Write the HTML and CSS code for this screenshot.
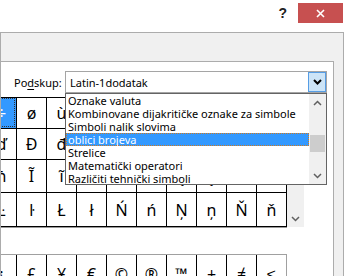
FILE: index.html
```html
<!DOCTYPE html>
<html lang="hr">
<head>
  <meta charset="UTF-8" />
  <meta name="viewport" content="width=device-width, initial-scale=1.0"/>
  <title>Simbol</title>
  <link rel="stylesheet" href="styles.css">
</head>
<body>
  <div class="titlebar">
    <span class="help">?</span>
    <div class="close">
      <svg width="9" height="9" viewBox="0 0 9 9"><path d="M1 1L8 8M8 1L1 8" stroke="#fff" stroke-width="1.6"/></svg>
    </div>
  </div>

  <div class="frame">
    <div class="tabs"></div>

    <div class="page">
      <div class="subset">
        <label class="subset-label">Po<u>d</u>skup:</label>
        <div class="combo">
          <span class="combo-value">Latin-1dodatak</span>
          <span class="combo-btn">
            <svg width="9" height="6" viewBox="0 0 9 6"><path d="M1 1L4.5 4.5L8 1" fill="none" stroke="#000" stroke-width="2"/></svg>
          </span>

          <!-- otvoreni popis podskupova -->
          <div class="dropdown">
            <ul class="options">
              <li>Oznake valuta</li>
              <li>Kombinovane dijakritičke oznake za simbole</li>
              <li>Simboli nalik slovima</li>
              <li class="selected">oblici brojeva</li>
              <li>Strelice</li>
              <li>Matematički operatori</li>
              <li>Različiti tehnički simboli</li>
            </ul>
            <div class="vscroll">
              <span class="arrow"><svg width="9" height="6" viewBox="0 0 9 6"><path d="M1 5L4.5 1.5L8 5" fill="none" stroke="#606060" stroke-width="1.5"/></svg></span>
              <span class="track"><span class="thumb"></span></span>
              <span class="arrow"><svg width="9" height="6" viewBox="0 0 9 6"><path d="M1 1L4.5 4.5L8 1" fill="none" stroke="#606060" stroke-width="1.5"/></svg></span>
            </div>
          </div>
        </div>
      </div>

      <div class="symbols">
        <div class="grid">
          <span class="cell active">÷</span><span class="cell">ø</span><span class="cell">ù</span><span class="cell">ú</span><span class="cell">û</span><span class="cell">ü</span><span class="cell">ý</span><span class="cell">þ</span><span class="cell">ÿ</span><span class="cell">Ā</span>
          <span class="cell">ď</span><span class="cell">Đ</span><span class="cell">đ</span><span class="cell">Ē</span><span class="cell">ē</span><span class="cell">Ĕ</span><span class="cell">ĕ</span><span class="cell">Ė</span><span class="cell">ė</span><span class="cell">Ę</span>
          <span class="cell">ħ</span><span class="cell">Ĩ</span><span class="cell">ĩ</span><span class="cell">Ī</span><span class="cell">ī</span><span class="cell">Ĭ</span><span class="cell">Į</span><span class="cell">į</span><span class="cell">İ</span><span class="cell">ı</span>
          <span class="cell">Ŀ</span><span class="cell">ŀ</span><span class="cell">Ł</span><span class="cell">ł</span><span class="cell">Ń</span><span class="cell">ń</span><span class="cell">Ņ</span><span class="cell">ņ</span><span class="cell">Ň</span><span class="cell">ň</span>
        </div>
        <div class="grid-scroll">
          <svg width="9" height="6" viewBox="0 0 9 6"><path d="M1 1L4.5 4.5L8 1" fill="none" stroke="#606060" stroke-width="1.5"/></svg>
        </div>
      </div>

      <div class="recent">
        <span class="cell">¡</span><span class="cell">£</span><span class="cell">¥</span><span class="cell">€</span><span class="cell">©</span><span class="cell">®</span><span class="cell">™</span><span class="cell">±</span><span class="cell">≠</span><span class="cell">≤</span>
      </div>
    </div>
  </div>
</body>
</html>
```

FILE: styles.css
```css
* {
  box-sizing: border-box;
  margin: 0;
  padding: 0;
}

body {
  width: 350px;
  height: 276px;
  overflow: hidden;
  background: #fff;
  font-family: 'Noto Sans', sans-serif;
  font-size: 11px;
  color: #000;
}

/* Naslovna traka */
.titlebar {
  height: 32px;
  display: flex;
  justify-content: flex-end;
  align-items: flex-start;
  padding: 3px 7px 0 0;
}

.help {
  font-family: 'Liberation Sans', sans-serif;
  font-weight: bold;
  font-size: 14px;
  line-height: 20px;
  color: #222;
  margin-right: 11px;
}

.close {
  width: 45px;
  height: 20px;
  background: #c75050;
  display: flex;
  align-items: center;
  justify-content: center;
}

/* Okvir dijaloga */
.frame {
  width: 344px;
  height: 244px;
  background: #f0f0f0;
  border: 1px solid #acacac;
  border-bottom: none;
  display: flex;
  flex-direction: column;
}

.tabs {
  height: 28px;
}

.page {
  flex: 1;
  width: 333px;
  background: #fff;
  border-top: 1px solid #acacac;
  border-right: 1px solid #acacac;
  overflow: hidden;
}

.subset {
  display: flex;
  align-items: center;
  padding: 9px 0 0 13px;
}

.subset-label {
  width: 51px;
}

.subset-label u {
  text-decoration-thickness: 1px;
  text-underline-offset: 2px;
}

.combo {
  position: relative;
  width: 262px;
  height: 22px;
  border: 1px solid #a5a5a5;
  display: flex;
  align-items: center;
  justify-content: space-between;
  padding-left: 4px;
}

.combo-btn {
  width: 18px;
  height: 20px;
  background: #cce4f7;
  border: 1px solid #569de5;
  display: flex;
  align-items: center;
  justify-content: center;
}

.dropdown {
  position: absolute;
  top: calc(100% + 1px);
  left: -1px;
  width: 262px;
  height: 92px;
  background: #fff;
  border: 1px solid #646464;
  display: flex;
  z-index: 5;
}

.options {
  flex: 1;
  list-style: none;
  overflow: hidden;
}

.options li {
  height: 13px;
  line-height: 13px;
  padding-left: 2px;
  white-space: nowrap;
}

.options li.selected {
  background: #3399ff;
  color: #fff;
  outline: 1px dotted #d07a20;
  outline-offset: -1px;
}

.vscroll {
  width: 17px;
  background: #f0f0f0;
  display: flex;
  flex-direction: column;
}

.vscroll .arrow {
  height: 17px;
  display: flex;
  align-items: center;
  justify-content: center;
}

.vscroll .track {
  flex: 1;
  padding: 24px 0 0 1px;
}

.thumb {
  display: block;
  width: 15px;
  height: 17px;
  background: #cdcdcd;
}

/* Mreža simbola */
.symbols {
  display: flex;
  margin-top: 4px;
}

.grid {
  margin-left: -15px;
  display: grid;
  grid-template-columns: repeat(10, 30px);
  grid-template-rows: 31px 31px 33px 34px;
  border-right: 1px solid #000;
  border-bottom: 1px solid #000;
  box-shadow: 0 1px 0 #9a9a9a;
}

.cell {
  border-left: 1px solid #000;
  border-top: 1px solid #000;
  display: flex;
  align-items: center;
  justify-content: center;
  font-size: 16px;
}

.cell.active {
  background: #3399ff;
  color: #fff;
  outline: 1px dotted #333;
  outline-offset: -2px;
}

.grid-scroll {
  width: 17px;
  height: 130px;
  background: #f0f0f0;
  display: flex;
  align-items: flex-end;
  justify-content: center;
  padding-bottom: 5px;
}

.recent {
  margin: 27px 0 0 -15px;
  width: 301px;
  height: 38px;
  display: grid;
  grid-template-columns: repeat(10, 30px);
  border-top: 1px solid #a0a0a0;
  border-right: 1px solid #a0a0a0;
}

.recent .cell {
  border-top: none;
}
```
